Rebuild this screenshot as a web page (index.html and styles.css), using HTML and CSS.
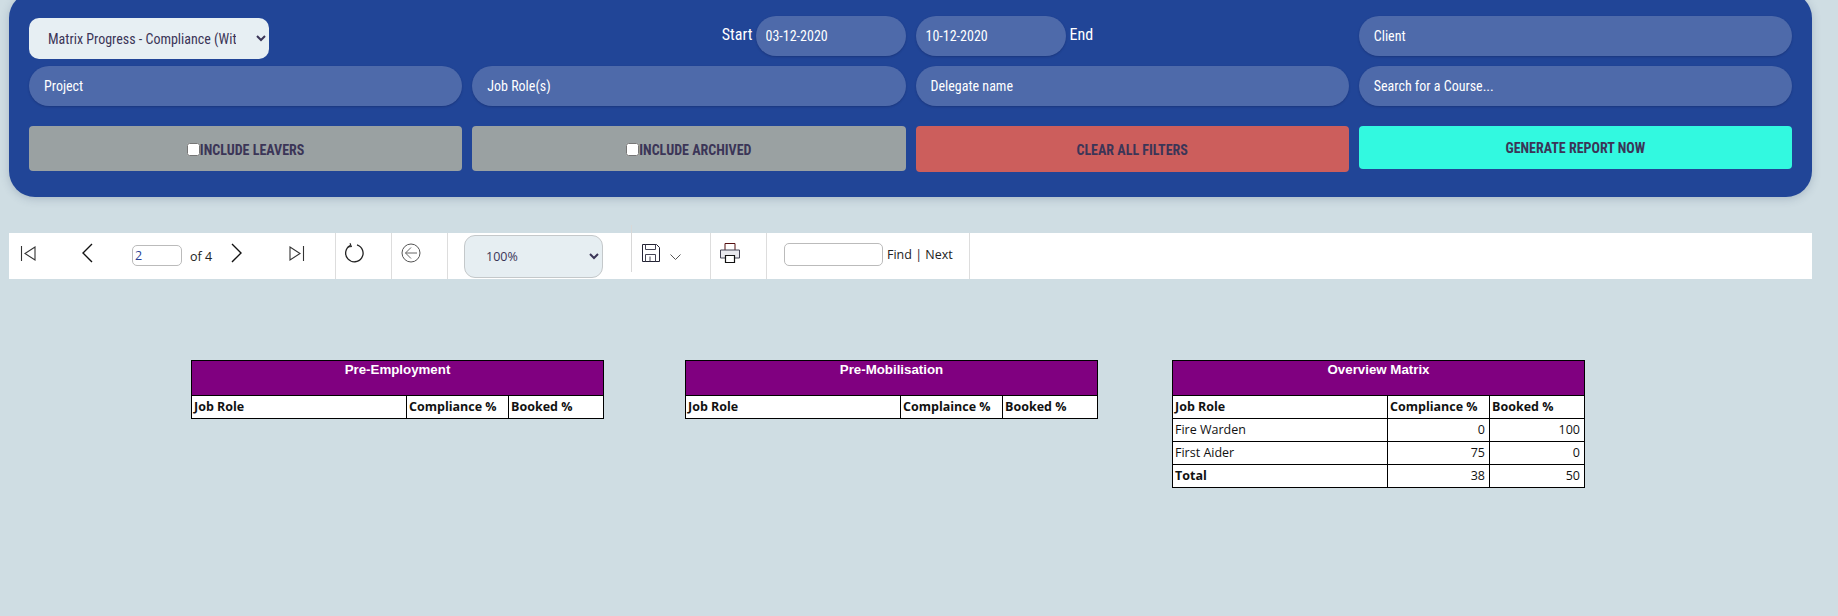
FILE: index.html
```html
<!DOCTYPE html>
<html lang="en">
<head>
<meta charset="utf-8">
<title>Matrix Progress Report</title>
<link rel="stylesheet" href="styles.css">
</head>
<body>
<section class="panel">
  <div class="filters">
    <div class="cell"><select class="report-select"><option>Matrix Progress - Compliance (With Booked)</option></select></div>
    <div class="cell cell-end"><label class="date-label date-label-start">Start</label><input class="pill pill-date" value="03-12-2020"></div>
    <div class="cell"><input class="pill pill-date" value="10-12-2020"><label class="date-label date-label-end">End</label></div>
    <input class="pill" placeholder="Client">
    <input class="pill" placeholder="Project">
    <input class="pill" placeholder="Job Role(s)">
    <input class="pill" placeholder="Delegate name">
    <input class="pill" placeholder="Search for a Course...">
  </div>
  <div class="actions">
    <label class="btn btn-grey"><input type="checkbox" class="check">INCLUDE LEAVERS</label>
    <label class="btn btn-grey"><input type="checkbox" class="check">INCLUDE ARCHIVED</label>
    <button class="btn btn-red">CLEAR ALL FILTERS</button>
    <button class="btn btn-cyan">GENERATE REPORT NOW</button>
  </div>
</section>

<nav class="toolbar">
  <div class="tool tool-paging">
    <svg class="ico ico-first" width="16" height="16" viewBox="0 0 16 16"><path d="M1.500 0v15M15 1v13L5 7.500z" fill="none" stroke="#333" stroke-width="1.100"/></svg>
    <svg class="ico ico-prev" width="12" height="20" viewBox="0 0 12 20"><path d="M11 1L2 10l9 9" fill="none" stroke="#111" stroke-width="1.400"/></svg>
    <input class="page-input" value="2">
    <span class="of">of 4</span>
    <svg class="ico ico-next" width="12" height="20" viewBox="0 0 12 20"><path d="M1 1l9 9-9 9" fill="none" stroke="#111" stroke-width="1.400"/></svg>
    <svg class="ico ico-last" width="16" height="16" viewBox="0 0 16 16"><path d="M14.500 0v15M1 1v13L11 7.500z" fill="none" stroke="#333" stroke-width="1.100"/></svg>
  </div>
  <div class="tool tool-refresh">
    <svg class="ico" width="20" height="20" viewBox="0 0 20 20"><path d="M6.500 2.300A8.700 8.700 0 1 0 13 1.800" fill="none" stroke="#222" stroke-width="1.300"/><path d="M6 .2l1.300 3.400-3.500.3" fill="none" stroke="#222" stroke-width="1.100"/></svg>
  </div>
  <div class="tool tool-back">
    <svg class="ico" width="20" height="20" viewBox="0 0 20 20"><circle cx="10" cy="10" r="9" fill="none" stroke="#555" stroke-width="1"/><path d="M16 10H4.500M10 4.500L4.500 10l5.500 5.500" fill="none" stroke="#666" stroke-width="1"/></svg>
  </div>
  <div class="tool tool-zoom">
    <select class="zoom-select"><option>100%</option></select>
    <span class="zoom-sep"></span>
  </div>
  <div class="tool tool-save">
    <svg width="18" height="18" viewBox="0 0 18 18"><path d="M.5.500h14l3 3v14H.5z" fill="none" stroke="#223" stroke-width="1"/><path d="M3.500.500v5h10v-5M3.500 17.500v-7h10v7M8 12.500v5" fill="none" stroke="#445" stroke-width="1"/></svg>
    <svg class="ico-caret" width="11" height="6" viewBox="0 0 11 6"><path d="M.5.500l5 5 5-5" fill="none" stroke="#555" stroke-width="1"/></svg>
  </div>
  <div class="tool tool-print">
    <svg class="ico" width="20" height="20" viewBox="0 0 20 20"><path d="M5 7V.5h10V7" fill="none" stroke="#511" stroke-width="1"/><path d="M5 15H.5V7h19v8H15" fill="#e8e8ee" stroke="#445" stroke-width="1"/><path d="M5.500 12.500h9v7h-9z" fill="#fff" stroke="#111" stroke-width="1.200"/></svg>
  </div>
  <div class="tool tool-find">
    <input class="find-input">
    <span class="find-links">Find | Next</span>
  </div>
</nav>

<main class="reports">
  <table class="report">
    <colgroup><col class="col-role"><col class="col-comp"><col class="col-book"></colgroup>
    <thead>
      <tr><th colspan="3" class="title">Pre-Employment</th></tr>
      <tr><th>Job Role</th><th>Compliance %</th><th>Booked %</th></tr>
    </thead>
  </table>
  <table class="report report-second">
    <colgroup><col class="col-role"><col class="col-comp"><col class="col-book"></colgroup>
    <thead>
      <tr><th colspan="3" class="title">Pre-Mobilisation</th></tr>
      <tr><th>Job Role</th><th>Complaince %</th><th>Booked %</th></tr>
    </thead>
  </table>
  <table class="report report-third">
    <colgroup><col class="col-role"><col class="col-comp"><col class="col-book"></colgroup>
    <thead>
      <tr><th colspan="3" class="title">Overview Matrix</th></tr>
      <tr><th>Job Role</th><th>Compliance %</th><th>Booked %</th></tr>
    </thead>
    <tbody>
      <tr><td>Fire Warden</td><td class="num">0</td><td class="num">100</td></tr>
      <tr><td>First Aider</td><td class="num">75</td><td class="num">0</td></tr>
      <tr><th>Total</th><td class="num">38</td><td class="num">50</td></tr>
    </tbody>
  </table>
</main>
</body>
</html>
```
FILE: styles.css
```css
* { box-sizing: border-box; }
html, body { margin: 0; height: 100%; overflow: hidden; }
body {
  background: #cfdde3;
  padding: 0 26px 0 9px;
  font-family: Roboto, "Liberation Sans", sans-serif;
  color: #3b3557;
}
.panel {
  margin-top: -8px;
  height: 205px;
  padding: 24px 20px 0;
  background: #214597;
  border-radius: 26px;
  box-shadow: 0 2px 8px rgba(60, 80, 110, .25);
  font-stretch: 75%;
}
.filters, .actions {
  display: grid;
  grid-template-columns: repeat(4, 1fr);
  gap: 10px;
}
.filters { grid-auto-rows: 40px; }
.actions { margin-top: 20px; align-items: start; }
.cell { display: flex; align-items: flex-start; }
.cell-end { justify-content: flex-end; }
.pill {
  width: 100%;
  height: 40px;
  padding: 0 15px;
  border: 0;
  border-radius: 20px;
  background: #4e6aaa;
  box-shadow: 0 1px 2px rgba(15, 30, 80, .35);
  color: #fff;
  font: inherit;
  font-size: 14px;
  font-stretch: 75%;
  outline: 0;
}
.pill::placeholder { color: #fff; opacity: 1; }
.pill-date { width: 150px; padding: 0 10px; flex: none; }
.date-label { color: #fff; font-size: 16px; line-height: 20px; margin-top: 9px; }
.date-label-start { margin-right: 3px; }
.date-label-end { margin-left: 4px; }
.report-select {
  width: 240px;
  height: 41px;
  margin-top: 2px;
  padding: 0 17px 0 15px;
  border: 0;
  border-radius: 10px;
  background: #e7eff3;
  color: #3b3557;
  font: inherit;
  font-size: 14px;
  font-stretch: 75%;
}
.btn {
  display: flex;
  align-items: center;
  justify-content: center;
  height: 45px;
  border: 0;
  border-radius: 4px;
  padding: 0;
  color: #3b3557;
  font: inherit;
  font-size: 14px;
  font-weight: 700;
  font-stretch: 75%;
}
.btn-grey { background: #9aa1a2; padding-top: 2px; }
.btn-red { background: #cc5e5c; height: 46px; padding-top: 2px; }
.btn-cyan { background: #32f9e0; height: 43px; }
.check { width: 13px; height: 13px; margin: 0; }

.toolbar {
  display: flex;
  height: 46px;
  margin-top: 36px;
  background: #fff;
  font-family: "Open Sans", "Noto Sans", sans-serif;
  color: #222;
  font-size: 12.5px;
}
.tool { display: flex; align-items: center; border-right: 1px solid #ddd; }
.ico { margin-bottom: 7px; flex: none; }
.ico-first, .ico-last { margin-bottom: 5px; }
.tool-paging { width: 327px; padding-left: 11px; }
.ico-prev { margin-left: 45px; }
.page-input {
  width: 50px; height: 21px; margin: 0 0 1px 39px; padding: 0 2px;
  border: 1px solid #bbb; border-radius: 5px; color: #2a3f95; font: inherit;
}
.of { margin-left: 8px; }
.ico-next { margin-left: 19px; }
.ico-last { margin-left: 46px; }
.tool-refresh { width: 56px; padding-left: 8px; }
.tool-back { width: 56px; padding-left: 9px; }
.tool-zoom { width: 184px; padding-left: 16px; border-right: 0; }
.zoom-select {
  width: 139px; height: 43px; padding: 0 17px;
  border: 1px solid #c4c8ca; border-radius: 11px;
  background: #e6eef2; color: #3b3557; font: inherit;
}
.zoom-sep {
  align-self: flex-start;
  flex: none;
  width: 1px;
  height: 47px;
  margin: -8px 0 0 28px;
  background: #d8d8d8;
}
.tool-save { width: 79px; padding-left: 10px; align-items: flex-start; padding-top: 11px; }
.ico-caret { margin: 10px 0 0 10px; }
.tool-print { width: 56px; padding-left: 9px; }
.tool-find { width: 203px; padding-left: 17px; }
.find-input { width: 99px; height: 23px; margin-bottom: 3px; border: 1px solid #bbb; border-radius: 5px; }
.find-links { margin-left: 4px; margin-bottom: 3px; }

.reports { display: flex; align-items: flex-start; margin-top: 81px; padding-left: 182px; }
.report {
  width: 413px;
  table-layout: fixed;
  border-collapse: collapse;
  background: #fff;
  color: #111;
  font-family: "Open Sans", "Noto Sans", sans-serif;
  font-size: 12.5px;
}
.report-second { margin-left: 81px; }
.report-third { margin-left: 74px; }
.col-role { width: 215px; }
.col-comp { width: 102px; }
.report th, .report td {
  height: 23px;
  padding: 0 2px;
  border: 1px solid #000;
  text-align: left;
  line-height: 16px;
}
.report .title {
  height: 35px;
  padding-top: 1px;
  vertical-align: top;
  background: #800080;
  color: #fff;
  text-align: center;
  font-family: "Liberation Sans", Arial, sans-serif;
  font-size: 13.3px;
}
.report .num { text-align: right; padding-right: 4px; }
```
